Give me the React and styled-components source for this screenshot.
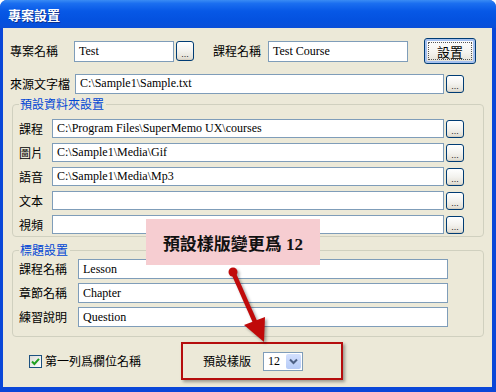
import React from "react"
import styled, { createGlobalStyle } from "styled-components"

const GlobalStyle = createGlobalStyle`
	html, body {
		margin: 0;
		padding: 0;
		background: #ffffff;
	}
	body {
		font-family: "Liberation Serif", "Noto Sans CJK TC", serif;
		font-size: 12px;
		color: #000;
	}
`

const uiFont = `"Liberation Serif", "Noto Sans CJK TC", serif`

const Window = styled.div`
	position: relative;
	width: 496px;
	height: 392px;
	box-sizing: border-box;
	display: flex;
	flex-direction: column;
	overflow: hidden;
	border-radius: 7px 7px 0 0;
	background: #0a47d8;
`

const TitleBar = styled.div`
	height: 28px;
	flex: none;
	display: flex;
	align-items: center;
	padding-left: 8px;
	background: linear-gradient(
		#3a8cf4 0%,
		#1b6ff0 12%,
		#0758e6 40%,
		#0452e0 70%,
		#0a4fd8 100%
	);
	color: #fff;
	font-family: "Noto Sans CJK TC", sans-serif;
	font-weight: 700;
	font-size: 13px;
	text-shadow: 1px 1px 0 #0b2f8f;
`

const Body = styled.div`
	flex: 1;
	margin: 0 4px 5px 3px;
	padding: 10px 0 0 7px;
	background: #ece9d8;
	display: flex;
	flex-direction: column;
`

const Row = styled.div`
	display: flex;
	align-items: center;
	height: ${p => p.h || 19}px;
	margin-top: ${p => p.mt || 0}px;
	flex: none;
`

const Label = styled.div`
	width: ${p => p.w}px;
	margin-left: ${p => p.ml || 0}px;
	flex: none;
	font-family: "Noto Sans CJK TC", sans-serif;
	font-size: 12px;
	line-height: 14px;
	white-space: nowrap;
`

const TextBox = styled.div`
	width: ${p => p.w}px;
	height: ${p => p.h || 19}px;
	box-sizing: border-box;
	flex: none;
	border: 1px solid #7f9db9;
	background: #fff;
	padding-left: 4px;
	display: flex;
	align-items: center;
	font-family: ${uiFont};
	font-size: 12px;
	white-space: nowrap;
	overflow: hidden;
`

const BrowseButton = styled.div`
	width: 18px;
	height: ${p => p.h || 18}px;
	margin-left: 2px;
	box-sizing: border-box;
	flex: none;
	border: 1px solid #003c74;
	border-radius: 3px;
	background: linear-gradient(#ffffff 0%, #f3f2ee 50%, #e3e0d6 90%, #d2cbbd 100%);
	display: flex;
	align-items: flex-end;
	justify-content: center;
	font-family: "Liberation Sans", sans-serif;
	font-size: 9px;
	line-height: 12px;
	color: #222;
`

const SetButton = styled.div`
	width: 52px;
	height: 26px;
	margin-left: 16px;
	box-sizing: border-box;
	flex: none;
	border: 1px solid #003c74;
	border-radius: 3px;
	background: linear-gradient(#ffffff 0%, #f4f3ef 55%, #e2dfd5 100%);
	box-shadow: inset 0 0 0 2px #a6c1ef;
	display: flex;
	align-items: center;
	justify-content: center;
	padding: 3px;
`

const FocusRing = styled.div`
	flex: 1;
	align-self: stretch;
	border: 1px dotted #555;
	display: flex;
	align-items: center;
	justify-content: center;
	font-family: "Noto Sans CJK TC", sans-serif;
	font-size: 13px;
`

const Group = styled.fieldset`
	margin: ${p => p.mt}px 0 0 2px;
	width: 472px;
	box-sizing: border-box;
	min-inline-size: 0;
	border: 1px solid #d0d0bf;
	border-radius: 4px;
	padding: ${p => p.pt}px 0 ${p => p.pb}px 6px;
	display: flex;
	flex-direction: column;
	gap: ${p => p.gap}px;
`

const Legend = styled.legend`
	padding: 0 2px 0 1px;
	color: #0046d5;
	font-family: "Noto Sans CJK TC", sans-serif;
	font-size: 12px;
	line-height: 14px;
`

const BottomRow = styled.div`
	display: flex;
	align-items: center;
	height: 38px;
	margin-top: 5px;
`

const CheckArea = styled.div`
	width: 171px;
	flex: none;
	display: flex;
	align-items: center;
	padding-left: 19px;
	box-sizing: border-box;
`

const CheckBox = styled.span`
	width: 13px;
	height: 13px;
	box-sizing: border-box;
	border: 1px solid #1c5180;
	background: linear-gradient(135deg, #dcdcd7, #ffffff);
	display: flex;
	align-items: center;
	justify-content: center;
	margin-right: 3px;
`

const HighlightBox = styled.div`
	width: 162px;
	height: 38px;
	box-sizing: border-box;
	border: 2px solid #b50d0d;
	box-shadow: 2px 2px 3px rgba(0, 0, 0, 0.35);
	display: flex;
	align-items: center;
	padding-left: 20px;
`

const Combo = styled.div`
	width: 40px;
	height: 19px;
	box-sizing: border-box;
	border: 1px solid #7f9db9;
	background: #fff;
	display: flex;
	align-items: center;
	justify-content: space-between;
	padding: 1px;
	font-family: ${uiFont};
	font-size: 12px;
`

const ComboValue = styled.span`
	padding-left: 3px;
`

const DropButton = styled.span`
	width: 15px;
	height: 15px;
	border-radius: 2px;
	background: linear-gradient(#d3e0fd, #b6cbf7);
	display: flex;
	align-items: center;
	justify-content: center;
`

const Callout = styled.div`
	position: absolute;
	left: 146px;
	top: 219px;
	width: 174px;
	height: 46px;
	background: #f6cdd1;
	display: flex;
	align-items: center;
	justify-content: center;
	font-family: "Liberation Serif", "Noto Sans CJK TC", serif;
	font-weight: 700;
	font-size: 17px;
	color: #111;
`

const ArrowLayer = styled.svg`
	position: absolute;
	left: 0;
	top: 0;
	pointer-events: none;
	filter: drop-shadow(2px 2px 1.5px rgba(0, 0, 0, 0.35));
`

const groupRows = [
	{ label: "課程", value: "C:\\Program Files\\SuperMemo UX\\courses" },
	{ label: "圖片", value: "C:\\Sample1\\Media\\Gif" },
	{ label: "語音", value: "C:\\Sample1\\Media\\Mp3" },
	{ label: "文本", value: "" },
	{ label: "視頻", value: "" },
]

const titleRows = [
	{ label: "課程名稱", value: "Lesson" },
	{ label: "章節名稱", value: "Chapter" },
	{ label: "練習說明", value: "Question" },
]

export default function App() {
	return (
		<>
			<GlobalStyle />
			<Window>
				<TitleBar>專案設置</TitleBar>
				<Body>
					<Row h={26}>
						<Label w={64}>專案名稱</Label>
						<TextBox w={100} h={21}>Test</TextBox>
						<BrowseButton h={20}>...</BrowseButton>
						<Label w={55} ml={19}>課程名稱</Label>
						<TextBox w={140} h={21}>Test Course</TextBox>
						<SetButton>
							<FocusRing>設置</FocusRing>
						</SetButton>
					</Row>
					<Row h={21} mt={9}>
						<Label w={65}>來源文字檔</Label>
						<TextBox w={369} h={20}>C:\Sample1\Sample.txt</TextBox>
						<BrowseButton>...</BrowseButton>
					</Row>

					<Group mt={3} pt={8} pb={2} gap={5}>
						<Legend>預設資料夾設置</Legend>
						{groupRows.map(r => (
							<Row key={r.label}>
								<Label w={33}>{r.label}</Label>
								<TextBox w={392}>{r.value}</TextBox>
								<BrowseButton>...</BrowseButton>
							</Row>
						))}
					</Group>

					<Group mt={6} pt={2} pb={9} gap={4}>
						<Legend>標題設置</Legend>
						{titleRows.map(r => (
							<Row key={r.label} h={20}>
								<Label w={59}>{r.label}</Label>
								<TextBox w={370} h={20}>{r.value}</TextBox>
							</Row>
						))}
					</Group>

					<BottomRow>
						<CheckArea>
							<CheckBox>
								<svg width="9" height="9" viewBox="0 0 9 9">
									<path d="M1 4.5 L3.4 7 L8 1.8" fill="none" stroke="#21a121" strokeWidth="2" />
								</svg>
							</CheckBox>
							<Label w={100}>第一列爲欄位名稱</Label>
						</CheckArea>
						<HighlightBox>
							<Label w={60}>預設樣版</Label>
							<Combo>
								<ComboValue>12</ComboValue>
								<DropButton>
									<svg width="9" height="7" viewBox="0 0 9 7">
										<path d="M1 1.5 L4.5 5 L8 1.5" fill="none" stroke="#4d6185" strokeWidth="2" />
									</svg>
								</DropButton>
							</Combo>
						</HighlightBox>
					</BottomRow>
				</Body>

				<Callout>預設樣版變更爲 12</Callout>
				<ArrowLayer width="496" height="392" viewBox="0 0 496 392">
					<circle cx="233" cy="272" r="4.5" fill="#c00a0a" />
					<line x1="233" y1="272" x2="255" y2="322" stroke="#c00a0a" strokeWidth="4.5" />
					<polygon points="244,325 265,317 264,342" fill="#c00a0a" />
				</ArrowLayer>
			</Window>
		</>
	)
}
